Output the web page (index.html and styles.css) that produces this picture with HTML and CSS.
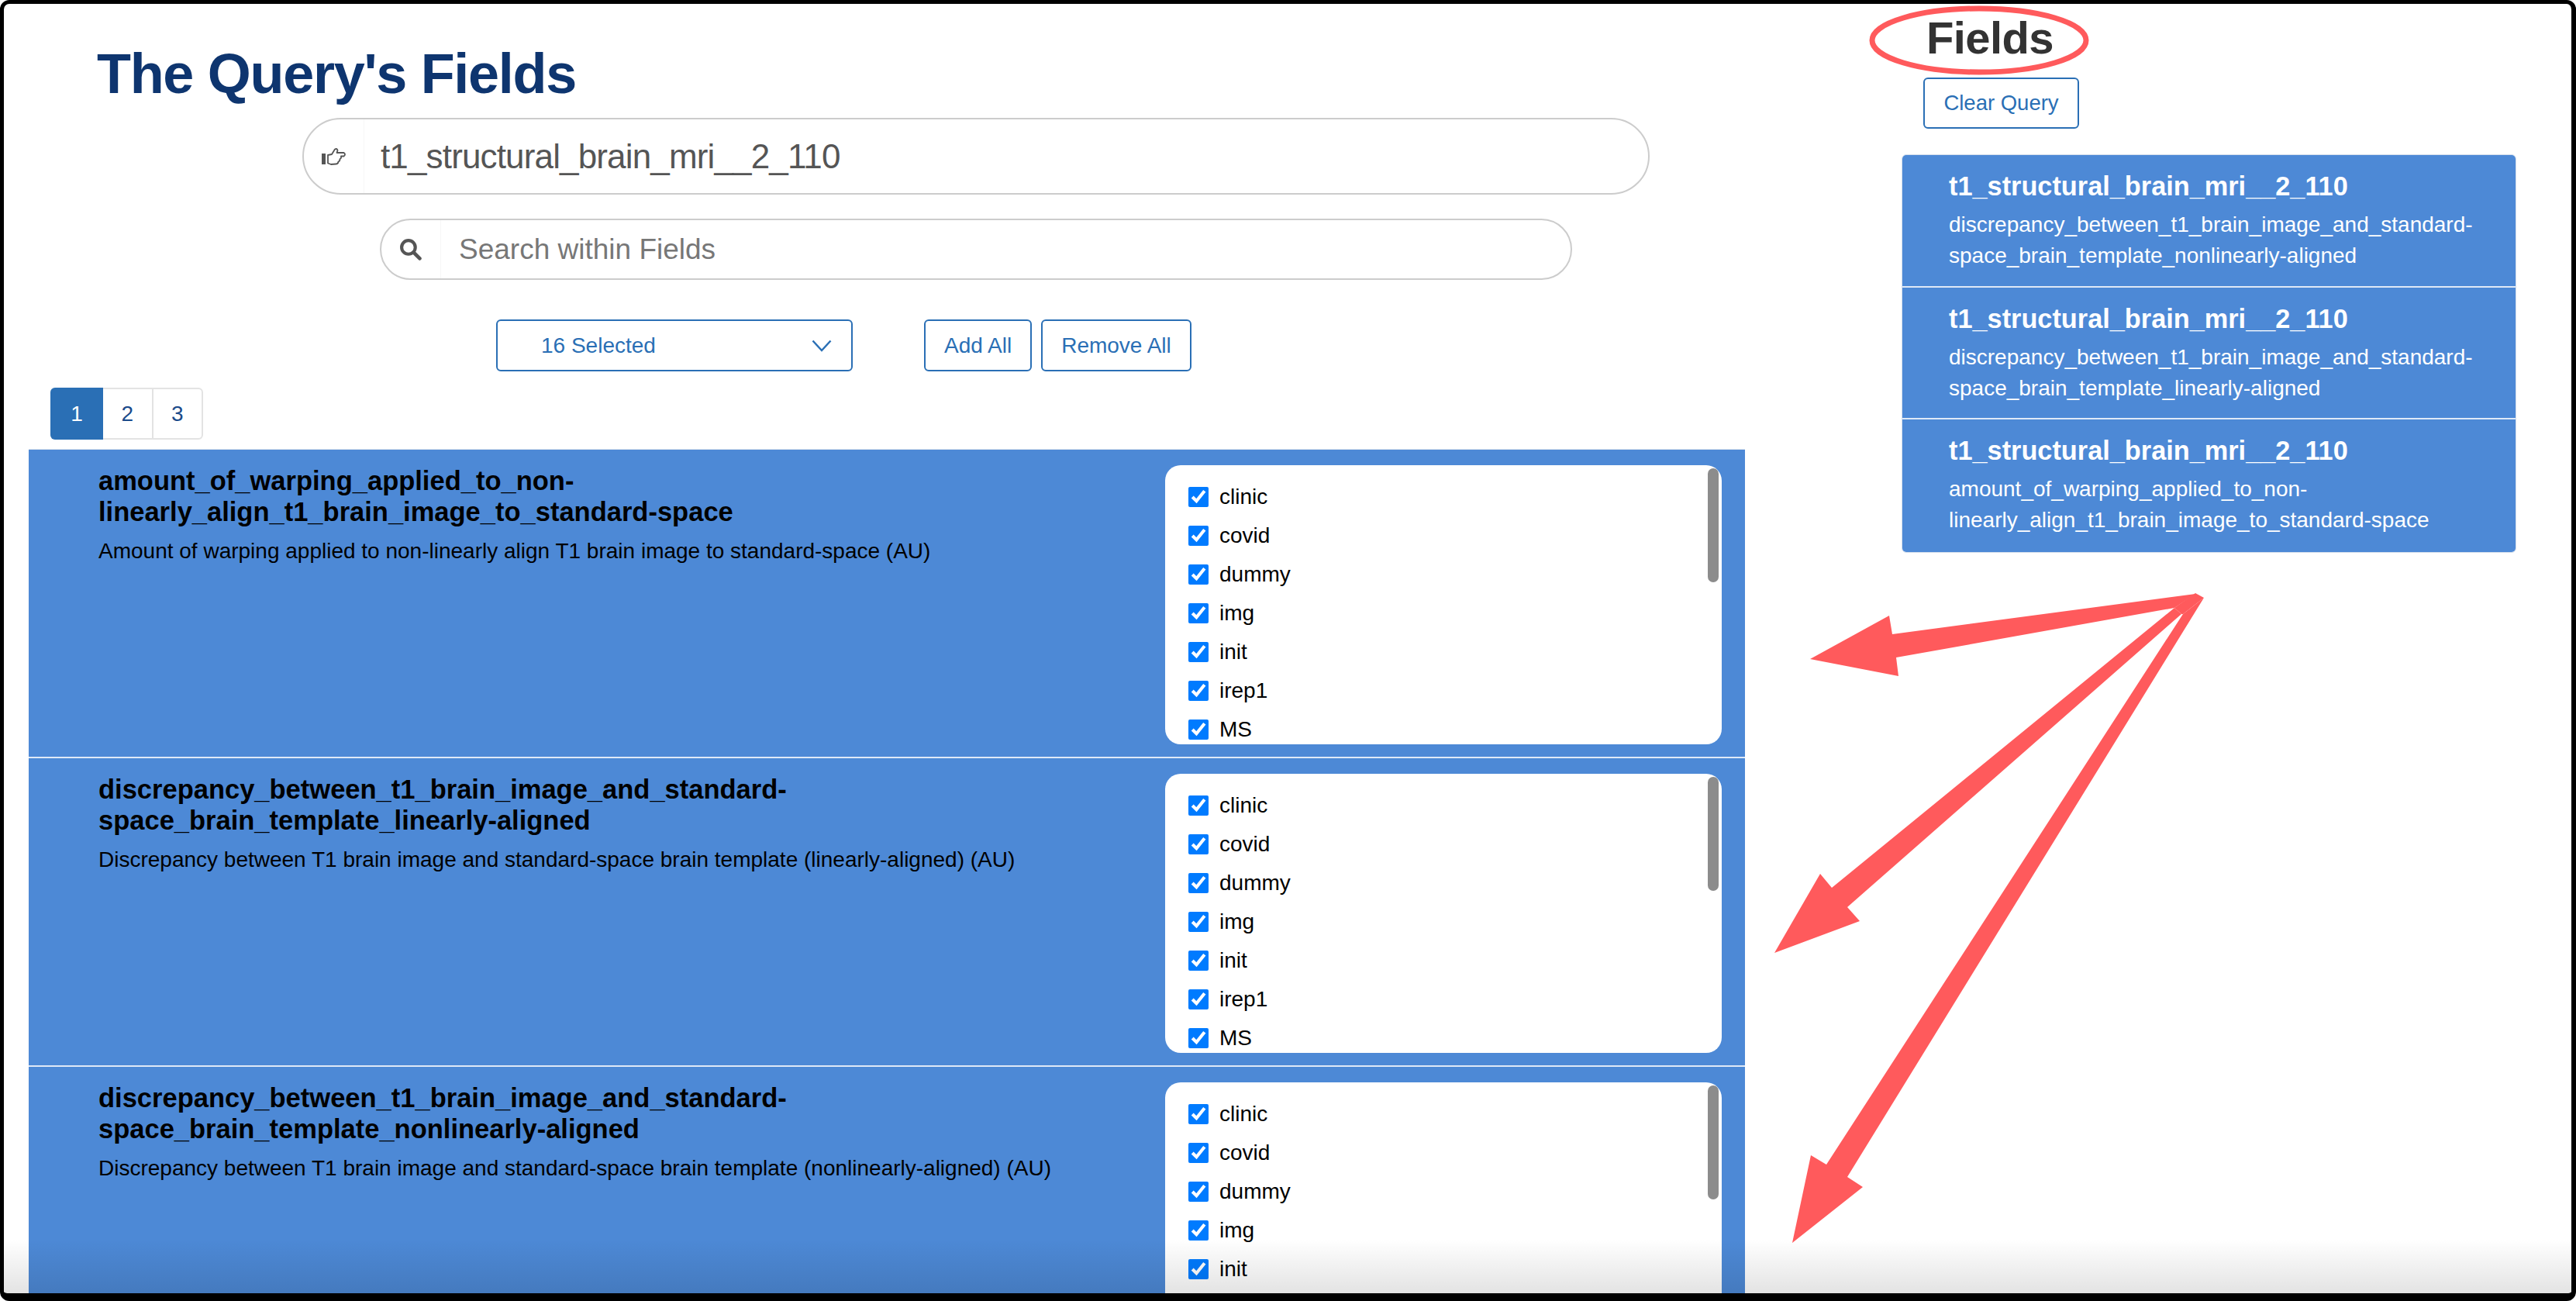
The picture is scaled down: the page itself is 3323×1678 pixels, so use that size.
FILE: index.html
```html
<!DOCTYPE html>
<html lang="en">

<head>
  <meta charset="UTF-8">
  <title>The Query's Fields</title>
  <link rel="stylesheet" href="styles.css">
</head>

<body>
  <div class="window">
    <div class="main">
      <h1 class="page-title">The Query's Fields</h1>

      <div class="pill query-bar">
        <span class="pill-addon">
          <svg class="icon-hand" viewBox="0 0 32 24">
            <rect x="0" y="8" width="5" height="14" fill="#555"/>
            <path d="M8 10 L13 9 L17 2.5 Q20 1 20.5 4 L19.5 7 L28.5 7 Q31.5 9 28.5 11.5 L25 11.5 Q25.5 14.5 23.5 15 Q23.5 18 21.5 18.500 Q21 21.500 18.500 21.500 L12 22 L8 20.500 Z" fill="none" stroke="#555" stroke-width="1.800" stroke-linejoin="round"/>
          </svg>
        </span>
        <span class="pill-text">t1_structural_brain_mri__2_110</span>
      </div>

      <div class="pill search-bar">
        <span class="pill-addon">
          <svg class="icon-search" viewBox="0 0 28 28">
            <circle cx="11.500" cy="11.500" r="8.500" fill="none" stroke="#555" stroke-width="4"/>
            <line x1="18" y1="18" x2="25.500" y2="25.500" stroke="#555" stroke-width="4.500" stroke-linecap="round"/>
          </svg>
        </span>
        <span class="pill-text">Search within Fields</span>
      </div>

      <div class="controls">
        <div class="dropdown">
          <span>16 Selected</span>
          <svg class="chevron" viewBox="0 0 26 16">
            <path d="M1.500 1.500 L13 14 L24.500 1.500" fill="none" stroke="#2a6fb5" stroke-width="2.500"/>
          </svg>
        </div>
        <div class="button-group">
          <button class="btn">Add All</button>
          <button class="btn">Remove All</button>
        </div>
      </div>

      <ul class="pagination">
        <li class="page active">1</li>
        <li class="page">2</li>
        <li class="page">3</li>
      </ul>

      <div class="field-list">
        <div class="field-row">
          <div class="field-info">
            <h3>amount_of_warping_applied_to_non-<br>linearly_align_t1_brain_image_to_standard-space</h3>
            <p>Amount of warping applied to non-linearly align T1 brain image to standard-space (AU)</p>
          </div>
          <div class="check-panel">
            <label class="check"><input type="checkbox" checked>clinic</label>
            <label class="check"><input type="checkbox" checked>covid</label>
            <label class="check"><input type="checkbox" checked>dummy</label>
            <label class="check"><input type="checkbox" checked>img</label>
            <label class="check"><input type="checkbox" checked>init</label>
            <label class="check"><input type="checkbox" checked>irep1</label>
            <label class="check"><input type="checkbox" checked>MS</label>
            <div class="scroll-thumb"></div>
          </div>
        </div>

        <div class="field-row">
          <div class="field-info">
            <h3>discrepancy_between_t1_brain_image_and_standard-<br>space_brain_template_linearly-aligned</h3>
            <p>Discrepancy between T1 brain image and standard-space brain template (linearly-aligned) (AU)</p>
          </div>
          <div class="check-panel">
            <label class="check"><input type="checkbox" checked>clinic</label>
            <label class="check"><input type="checkbox" checked>covid</label>
            <label class="check"><input type="checkbox" checked>dummy</label>
            <label class="check"><input type="checkbox" checked>img</label>
            <label class="check"><input type="checkbox" checked>init</label>
            <label class="check"><input type="checkbox" checked>irep1</label>
            <label class="check"><input type="checkbox" checked>MS</label>
            <div class="scroll-thumb"></div>
          </div>
        </div>

        <div class="field-row">
          <div class="field-info">
            <h3>discrepancy_between_t1_brain_image_and_standard-<br>space_brain_template_nonlinearly-aligned</h3>
            <p>Discrepancy between T1 brain image and standard-space brain template (nonlinearly-aligned) (AU)</p>
          </div>
          <div class="check-panel">
            <label class="check"><input type="checkbox" checked>clinic</label>
            <label class="check"><input type="checkbox" checked>covid</label>
            <label class="check"><input type="checkbox" checked>dummy</label>
            <label class="check"><input type="checkbox" checked>img</label>
            <label class="check"><input type="checkbox" checked>init</label>
            <div class="scroll-thumb"></div>
          </div>
        </div>
      </div>
    </div>

    <div class="side">
      <h2 class="side-title">Fields</h2>
      <button class="btn btn-clear">Clear Query</button>
      <div class="query-list">
        <div class="query-item">
          <h4>t1_structural_brain_mri__2_110</h4>
          <p>discrepancy_between_t1_brain_image_and_standard-<br>space_brain_template_nonlinearly-aligned</p>
        </div>
        <div class="query-item">
          <h4>t1_structural_brain_mri__2_110</h4>
          <p>discrepancy_between_t1_brain_image_and_standard-<br>space_brain_template_linearly-aligned</p>
        </div>
        <div class="query-item">
          <h4>t1_structural_brain_mri__2_110</h4>
          <p>amount_of_warping_applied_to_non-<br>linearly_align_t1_brain_image_to_standard-space</p>
        </div>
      </div>
    </div>

    <div class="bottom-fade"></div>
  </div>

  <!-- red annotations drawn over the screenshot -->
  <svg class="annotations" viewBox="0 0 3323 1678">
    <ellipse cx="2553" cy="52" rx="138" ry="41" fill="none" stroke="#ff5a5c" stroke-width="7"/>
    <polygon fill="#ff5a5c" points="2832,765 2843,771 2816,792 2814,792 2805,784"/>
    <polygon fill="#ff5a5c" points="2832,766 2441,818 2437,794 2335,850 2449,872 2446,848 2805,784"/>
    <polygon fill="#ff5a5c" points="2805,784 2363,1145 2348,1127 2289,1229 2399,1188 2383,1170 2814,792"/>
    <polygon fill="#ff5a5c" points="2816,792 2356,1502 2336,1490 2312,1603 2403,1531 2383,1518 2843,771"/>
  </svg>
</body>

</html>
```

FILE: styles.css
```css
* {
  box-sizing: border-box;
}

html,
body {
  margin: 0;
  padding: 0;
  background: #fff;
}

body {
  position: relative;
  width: 3323px;
  height: 1678px;
  overflow: hidden;
  font-family: "Liberation Sans", Arial, sans-serif;
}

.window {
  position: relative;
  display: flex;
  width: 100%;
  height: 100%;
  overflow: hidden;
  border-style: solid;
  border-color: #000;
  border-width: 5px 6px 10px 5px;
  border-radius: 12px;
  background: #fff;
}

.main {
  width: 2246px;
  padding-left: 32px;
  flex-shrink: 0;
}

.page-title {
  margin: 48px 0 0 88px;
  font-size: 72px;
  line-height: 84px;
  font-weight: 700;
  letter-spacing: -1.3px;
  color: #0e356f;
}

.pill {
  display: flex;
  align-items: center;
  background: #fff;
  border: 2px solid #ccc;
  border-radius: 50px;
}

.pill-addon {
  display: flex;
  align-items: center;
  height: 100%;
  border-right: 1px solid #f7f7f7;
}

.pill-text {
  color: #555;
}

.query-bar {
  width: 1738px;
  height: 99px;
  margin: 15px 0 0 353px;
}

.query-bar .pill-addon {
  width: 78px;
  padding-left: 23px;
}

.query-bar .pill-text {
  margin-left: 21px;
  font-size: 44px;
  letter-spacing: -.85px;
}

.icon-hand {
  width: 32px;
  height: 24px;
}

.search-bar {
  width: 1538px;
  height: 79px;
  margin: 31px 0 0 453px;
}

.search-bar .pill-addon {
  width: 77px;
  padding-left: 23px;
}

.search-bar .pill-text {
  margin-left: 23px;
  font-size: 37px;
  color: #777;
}

.icon-search {
  width: 29px;
  height: 29px;
}

.controls {
  display: flex;
  margin: 51px 0 0 603px;
}

.dropdown {
  display: flex;
  align-items: center;
  justify-content: space-between;
  width: 460px;
  height: 67px;
  padding: 0 25px 0 56px;
  border: 2px solid #2a6fb5;
  border-radius: 6px;
  font-size: 28px;
  color: #2a6fb5;
}

.chevron {
  width: 26px;
  height: 16px;
}

.button-group {
  display: flex;
  gap: 12px;
  margin-left: 92px;
}

.btn {
  height: 67px;
  padding: 0 24px;
  background: #fff;
  border: 2px solid #2a6fb5;
  border-radius: 6px;
  font-family: inherit;
  font-size: 28px;
  color: #2a6fb5;
}

.pagination {
  display: flex;
  width: 197px;
  height: 67px;
  margin: 21px 0 0 28px;
  padding: 0;
  list-style: none;
  border: 2px solid #e3e3e3;
  border-radius: 6px;
}

.page {
  flex: 1;
  margin: -2px 0;
  font-size: 28px;
  line-height: 67px;
  text-align: center;
  color: #1a4a8a;
  border-left: 2px solid #e3e3e3;
}

.page.active {
  flex: 0 0 68px;
  margin-left: -2px;
  background: #2a6fb5;
  color: #fff;
  border: 0;
  border-radius: 6px 0 0 6px;
}

.page.active + .page {
  border-left: 0;
}

.field-list {
  width: 2214px;
  margin-top: 12px;
  border-top: 1px solid #e0e6ee;
}

.field-row {
  display: flex;
  justify-content: space-between;
  height: 398px;
  padding: 20px 30px 0 90px;
  background: #4d89d6;
  border-bottom: 2px solid #dfe9f7;
}

.field-info {
  color: #000;
}

.field-info h3 {
  margin: 0;
  font-size: 34.5px;
  line-height: 40px;
  font-weight: 700;
}

.field-info p {
  margin: 11px 0 0;
  font-size: 28px;
  line-height: 40px;
}

.check-panel {
  position: relative;
  flex: 0 0 718px;
  height: 360px;
  padding-top: 28px;
  overflow: hidden;
  background: #fff;
  border-radius: 20px;
}

.check {
  display: flex;
  align-items: center;
  height: 26px;
  margin: 0 0 24px 30px;
  font-size: 28px;
  color: #000;
}

.check input {
  width: 26px;
  height: 26px;
  margin: 0 14px 0 0;
  accent-color: #007bff;
}

.scroll-thumb {
  position: absolute;
  top: 4px;
  right: 4px;
  width: 14px;
  height: 147px;
  background: #8c8c8c;
  border-radius: 7px;
}

.side {
  width: 793px;
  margin-left: 202px;
  flex-shrink: 0;
}

.side-title {
  margin: 12px 0 0 32px;
  font-size: 58px;
  line-height: 64px;
  font-weight: 700;
  letter-spacing: -.6px;
  color: #333;
}

.btn-clear {
  display: block;
  width: 201px;
  height: 66px;
  margin: 19px 0 0 28px;
  padding: 0;
  font-size: 27.5px;
}

.query-list {
  margin-top: 33px;
  border: 1px solid #d5dfec;
  border-radius: 6px;
  overflow: hidden;
}

.query-item {
  height: 170.500px;
  padding: 19px 20px 0 60px;
  background: #4d89d6;
  color: #fff;
  border-bottom: 2px solid #dfe9f7;
}

.query-item:last-child {
  border-bottom: 0;
}

.query-item h4 {
  margin: 0;
  font-size: 34.3px;
  line-height: 42px;
  font-weight: 700;
}

.query-item p {
  margin: 9px 0 0;
  font-size: 28px;
  line-height: 40px;
}

.bottom-fade {
  position: absolute;
  left: 0;
  right: 0;
  bottom: 0;
  height: 70px;
  background: linear-gradient(rgba(0, 0, 0, 0), rgba(0, 0, 0, .11));
  pointer-events: none;
}

.annotations {
  position: absolute;
  top: 0;
  left: 0;
  width: 3323px;
  height: 1678px;
  pointer-events: none;
}
```
